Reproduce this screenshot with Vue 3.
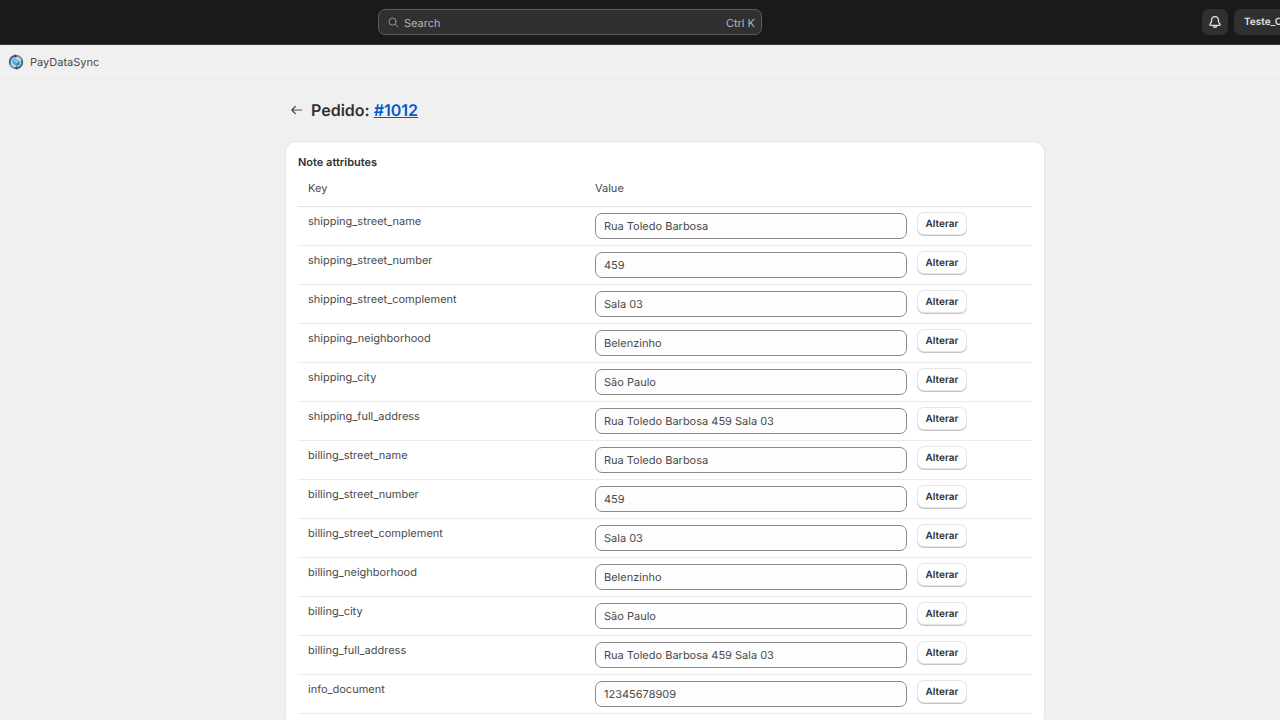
<script setup>
import { reactive } from 'vue'

const attributes = reactive([
  { key: 'shipping_street_name', value: 'Rua Toledo Barbosa' },
  { key: 'shipping_street_number', value: '459' },
  { key: 'shipping_street_complement', value: 'Sala 03' },
  { key: 'shipping_neighborhood', value: 'Belenzinho' },
  { key: 'shipping_city', value: 'São Paulo' },
  { key: 'shipping_full_address', value: 'Rua Toledo Barbosa 459 Sala 03' },
  { key: 'billing_street_name', value: 'Rua Toledo Barbosa' },
  { key: 'billing_street_number', value: '459' },
  { key: 'billing_street_complement', value: 'Sala 03' },
  { key: 'billing_neighborhood', value: 'Belenzinho' },
  { key: 'billing_city', value: 'São Paulo' },
  { key: 'billing_full_address', value: 'Rua Toledo Barbosa 459 Sala 03' },
  { key: 'info_document', value: '12345678909' },
])
</script>

<template>
  <div class="viewport">
    <div class="admin">
      <header class="topbar">
        <label class="search">
          <svg class="search-icon" viewBox="0 0 12 12" aria-hidden="true">
            <circle cx="5" cy="5" r="3.9" />
            <path d="M8 8l3 3" />
          </svg>
          <input type="search" placeholder="Search" aria-label="Search" />
          <kbd>Ctrl K</kbd>
        </label>
        <div class="actions">
          <button class="bell" type="button" aria-label="Notifications">
            <svg viewBox="0 0 14 14" aria-hidden="true">
              <path d="M7 1.6C4.8 1.6 3.7 3.2 3.6 5L3.4 6.9C3.2 8 1.9 8.5 1.9 9.7c0 .5.3.7.8.7h8.6c.5 0 .8-.2.8-.7 0-1.2-1.3-1.7-1.5-2.8L10.400 5C10.300 3.200 9.200 1.600 7 1.600Z" />
              <path d="M5.300 10.600c.1 1.100.8 1.700 1.700 1.700s1.600-.6 1.700-1.700" />
            </svg>
          </button>
          <button class="store" type="button">Teste_C</button>
        </div>
      </header>

      <nav class="appbar">
        <svg class="logo" viewBox="0 0 16 16" aria-hidden="true">
          <circle cx="8" cy="8" r="6.300" fill="#c4dae5" stroke="#7994a2" stroke-width="2" />
          <path d="M2 9.800A6.300 6.300 0 0 1 6.500 1.900M14 6.200A6.300 6.300 0 0 1 9.500 14.100" fill="none" stroke="#48616f" stroke-width="1.600" />
          <path d="M6.500.2l3 1.700-2.700 2zM9.500 15.800l-3-1.700 2.700-2z" fill="#2e4857" />
          <path d="M3.800 5.800L6.500 4.400l5.800 3-.8 3.700-2.800 1.200-4-2.900z" fill="#48a6d8" />
          <path d="M4.800 6.600L7 5.600l4.200 2.200-2.200 1.400z" fill="#83cdee" />
          <path d="M8.800 9.400l2.500-1.400-.4 2.600-2 .9z" fill="#287ba9" />
        </svg>
        <span>PayDataSync</span>
      </nav>

      <main class="page">
        <div class="page-title">
          <button class="back" type="button" aria-label="Voltar">
            <svg viewBox="0 0 12 10" aria-hidden="true">
              <path d="M11 5H1.300M4.800 1.500L1.300 5l3.500 3.500" />
            </svg>
          </button>
          <h1>Pedido: <a href="#1012">#1012</a></h1>
        </div>

        <section class="card">
          <h2>Note attributes</h2>
          <table>
            <thead>
              <tr>
                <th class="key" scope="col">Key</th>
                <th scope="col">Value</th>
              </tr>
            </thead>
            <tbody>
              <tr v-for="item in attributes" :key="item.key">
                <td><label :for="item.key">{{ item.key }}</label></td>
                <td>
                  <div class="field">
                    <input :id="item.key" v-model="item.value" type="text" />
                    <button class="change" type="button">Alterar</button>
                  </div>
                </td>
              </tr>
            </tbody>
          </table>
        </section>
      </main>
    </div>
  </div>
</template>

<style>
body {
  margin: 0;
  background: #f0f0f0;
}
</style>

<style scoped>
.viewport {
  height: 100vh;
  overflow: hidden;
  background: #f0f0f0;
  color: #4a4a4a;
  font-family: Inter, "Liberation Sans", sans-serif;
  font-size: 11px;
  line-height: 16px;
  text-rendering: geometricPrecision;
}
.viewport * {
  box-sizing: border-box;
}
button,
input,
kbd {
  font: inherit;
  color: inherit;
  text-rendering: inherit;
}
button {
  border: 0;
  padding: 0;
}
.admin {
  width: calc(100% + 50px);
}
.topbar {
  display: flex;
  align-items: center;
  height: 45px;
  padding: 0 6px 0 378px;
  background: #1a1a1a;
  border-bottom: 1px solid #3c3c3c;
}
.search {
  display: flex;
  align-items: center;
  width: 384px;
  height: 26px;
  padding: 1px 6px 0 9px;
  border: 1px solid #5c5c5c;
  border-radius: 7px;
  background: #303030;
  color: #b5b5b5;
}
.search-icon {
  width: 11px;
  height: 11px;
  margin-right: 5px;
  fill: none;
  stroke: #999;
  stroke-width: 1;
  stroke-linecap: round;
}
.search input {
  flex: 1;
  min-width: 0;
  padding: 0;
  border: 0;
  outline: 0;
  background: none;
}
.search input::placeholder {
  color: #b5b5b5;
}
.actions {
  display: flex;
  gap: 6px;
  margin-left: auto;
}
.bell,
.store {
  height: 26px;
  border-radius: 7px;
  background: #303030;
  color: #e3e3e3;
}
.bell {
  display: grid;
  place-items: center;
  width: 26px;
}
.bell svg {
  width: 14px;
  height: 14px;
  fill: none;
  stroke: #e3e3e3;
  stroke-width: 1.3;
}
.store {
  width: 90px;
  padding-left: 10px;
  font-size: 10px;
  font-weight: 600;
  text-align: left;
}
.appbar {
  display: flex;
  align-items: center;
  gap: 6px;
  height: 35px;
  padding: 0 8px;
  border-bottom: 1px solid #ebebeb;
}
.logo {
  width: 16px;
  height: 16px;
}
.page {
  max-width: 758px;
  margin: 0 auto;
  padding-top: 19px;
}
.page-title {
  display: flex;
  align-items: center;
  gap: 8px;
  height: 22px;
  padding-left: 4px;
}
.back {
  display: grid;
  width: 13px;
  background: none;
}
.back svg {
  width: 13px;
  height: 10px;
  fill: none;
  stroke: #4a4a4a;
  stroke-width: 1.2;
  stroke-linecap: round;
  stroke-linejoin: round;
}
h1 {
  margin: 0;
  color: #303030;
  font-size: 16px;
  font-weight: 600;
  line-height: 22px;
}
h1 a {
  color: #005bd3;
}
.card {
  margin-top: 21px;
  padding: 12px;
  border-radius: 10px;
  background: #fff;
  box-shadow: 0 0 0 1px #e6e6e6, 0 1px 1px #d8d8d8;
}
h2 {
  margin: 0;
  color: #303030;
  font-size: 11px;
  font-weight: 600;
  line-height: 16px;
}
table {
  width: 100%;
  border-collapse: separate;
  border-spacing: 0;
  table-layout: fixed;
}
th,
td {
  padding: 6px 10px;
  border-bottom: 1px solid #ebebeb;
  text-align: left;
  vertical-align: top;
}
th {
  padding: 10px;
  border-color: #e3e3e3;
  font-weight: 400;
}
.key {
  width: 287px;
}
td label {
  display: block;
}
td {
  height: 39px;
}
.field {
  display: flex;
  align-items: flex-start;
  gap: 11px;
}
.field input {
  width: 312px;
  height: 26px;
  padding: 0 8px;
  border: 1px solid #8a8a8a;
  border-radius: 7px;
  background: #fdfdfd;
}
.change {
  width: 48px;
  height: 21px;
  border-radius: 6px;
  background: #fff;
  box-shadow: 0 0 0 1px #e6e6e6, 0 1px 0 1px #c4c4c4;
  color: #303030;
  font-size: 10px;
  font-weight: 600;
}
</style>
